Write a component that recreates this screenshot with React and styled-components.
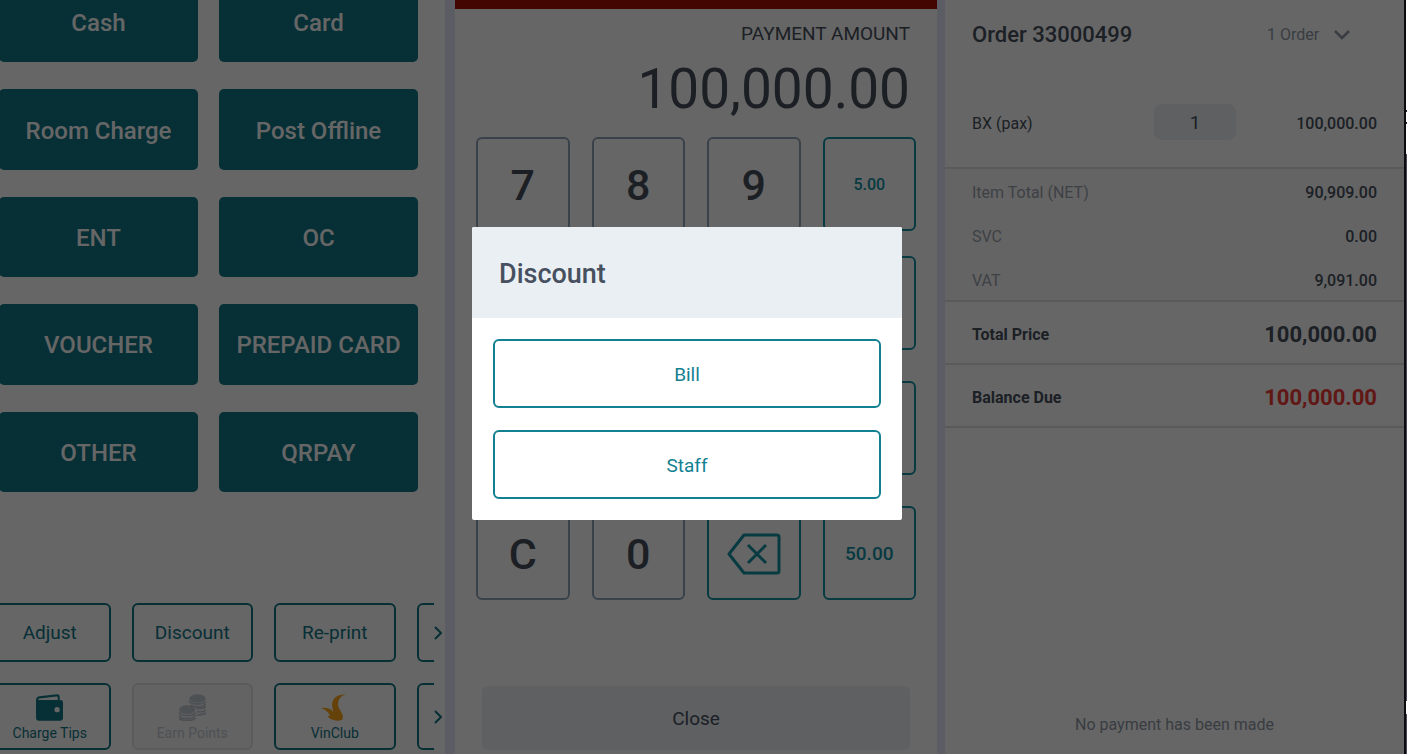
import { useState } from "react";
import styled, { createGlobalStyle, css } from "styled-components";

/**
 * POS payment screen
 * - left: payment methods + bill actions
 * - middle: amount and keypad
 * - right: order summary
 * - discount dialog sits over all three
 */

const METHODS = [
  "Cash",
  "Card",
  "Room Charge",
  "Post Offline",
  "ENT",
  "OC",
  "VOUCHER",
  "PREPAID CARD",
  "OTHER",
  "QRPAY",
];

const KEY_ROWS = [
  ["7", "8", "9", "5.00"],
  ["4", "5", "6", "10.00"],
  ["1", "2", "3", "20.00"],
  ["C", "0", "back", "50.00"],
];

const TOTALS = [
  { label: "Item Total (NET)", value: "90,909.00" },
  { label: "SVC", value: "0.00" },
  { label: "VAT", value: "9,091.00" },
];

const WalletIcon = () => (
  <svg width="27" height="27" viewBox="0 0 82 81" aria-hidden="true">
    <path
      fill="currentColor"
      fillRule="evenodd"
      d="M0 18Q0 8 10 6L64 0Q72 0 72 8V18H74Q82 18 82 26V72Q82 81 73 81H9Q0 81 0 72ZM10 13Q6 14 7 18H66V9Q66 6 62 7ZM64 39A8 8 0 1 0 64 55A8 8 0 1 0 64 39Z"
    />
  </svg>
);

const CoinsIcon = () => (
  <svg width="27" height="27" viewBox="0 0 82 81" aria-hidden="true">
    <g fill="currentColor">
      <ellipse cx="56" cy="13" rx="25" ry="13" />
      <ellipse cx="25" cy="47" rx="25" ry="13" />
    </g>
    <g fill="none" stroke="currentColor" strokeWidth="6">
      <path d="M31 20C36 33 76 33 81 20" />
      <path d="M36 33C46 41 76 42 81 29" />
      <path d="M52 43C64 44 78 42 81 38" />
      <path d="M54 53C66 54 78 52 81 47" />
      <path d="M54 63C66 63 78 61 81 56" />
      <path d="M0 55C5 68 45 68 50 55" />
      <path d="M0 64C5 77 45 77 50 64" />
      <path d="M0 72C5 82 45 82 50 72" />
    </g>
  </svg>
);

const VinIcon = () => (
  <svg width="27" height="27" viewBox="0 0 80 81" aria-hidden="true">
    <path
      fill="#f9a61a"
      d="M78 1C48 1 32 13 33 33C33 41 35 47 37 54C30 45 17 40 0 42C12 46 21 54 27 65L19 67C25 75 36 81 52 80C62 80 67 75 65 66C63 53 52 46 51 32C50 17 58 4 78 1Z"
    />
  </svg>
);

const BackspaceIcon = () => (
  <svg width="54" height="42" viewBox="0 0 54 42" aria-hidden="true">
    <g fill="none" stroke="currentColor" strokeWidth="3" strokeLinejoin="round">
      <path d="M17 2H50Q52 2 52 4V38Q52 40 50 40H17L2 21Z" />
      <path d="M21 12L39 30M39 12L21 30" />
    </g>
  </svg>
);

const ChevronRight = () => (
  <svg width="8" height="14" viewBox="0 0 8 14" aria-hidden="true">
    <path d="M1 1L7 7L1 13" fill="none" stroke="currentColor" strokeWidth="2" />
  </svg>
);

const ChevronDown = () => (
  <svg width="16" height="11" viewBox="0 0 16 11" aria-hidden="true">
    <path d="M1 1L8 8L15 1" fill="none" stroke="currentColor" strokeWidth="2.5" />
  </svg>
);

function App() {
  const [dialogOpen, setDialogOpen] = useState(true);
  const [qty, setQty] = useState("1");

  // the two middle rows are behind the dialog, no need to draw their labels
  const keyContent = (k, row) => {
    if (dialogOpen && (row === 1 || row === 2)) return null;
    return k === "back" ? <BackspaceIcon /> : k;
  };

  return (
    <Screen>
      <GlobalStyle />
      <Register>
        <MethodsPanel>
          <MethodGrid>
            {METHODS.map((name) => (
              <MethodButton key={name}>{name}</MethodButton>
            ))}
          </MethodGrid>

          <Actions>
            <ActionBar>
              <ActionClip>
                <ActionStrip>
                  <ActionButton>Adjust</ActionButton>
                  <ActionButton onClick={() => setDialogOpen(true)}>Discount</ActionButton>
                  <ActionButton>Re-print</ActionButton>
                  <ActionButton aria-label="More" />
                </ActionStrip>
              </ActionClip>
              <MoreButton aria-label="Next actions">
                <ChevronRight />
              </MoreButton>
            </ActionBar>
            <ActionBar>
              <ActionClip>
                <ActionStrip>
                  <ActionButton $small>
                    <WalletIcon />
                    Charge Tips
                  </ActionButton>
                  <ActionButton $small disabled>
                    <CoinsIcon />
                    Earn Points
                  </ActionButton>
                  <ActionButton $small>
                    <VinIcon />
                    VinClub
                  </ActionButton>
                  <ActionButton $small aria-label="More" />
                </ActionStrip>
              </ActionClip>
              <MoreButton aria-label="Next services">
                <ChevronRight />
              </MoreButton>
            </ActionBar>
          </Actions>
        </MethodsPanel>

        <PayPanel>
          <AmountBox>
            <AmountLabel>PAYMENT AMOUNT</AmountLabel>
            <Amount>100,000.00</Amount>
          </AmountBox>
          <Keypad>
            {KEY_ROWS.map((row, r) => (
              <KeyRow key={r}>
                {row.map((k, i) => (
                  <Key
                    key={k}
                    $accent={i === 3 || k === "back"}
                    $size={i < 3 ? 43 : r === 0 ? 16 : 19}
                    aria-label={k === "back" ? "Backspace" : k}
                  >
                    {keyContent(k, r)}
                  </Key>
                ))}
              </KeyRow>
            ))}
          </Keypad>
          <CloseButton>Close</CloseButton>
        </PayPanel>

        <OrderPanel>
          <OrderHead>
            <OrderTitle>Order 33000499</OrderTitle>
            <OrderPicker>
              <OrderSelect aria-label="Orders">
                <option>1 Order</option>
              </OrderSelect>
              <ChevronDown />
            </OrderPicker>
          </OrderHead>

          <ItemRow>
            <ItemName htmlFor="qty">BX (pax)</ItemName>
            <QtyInput id="qty" value={qty} onChange={(e) => setQty(e.target.value)} />
            <Price>100,000.00</Price>
          </ItemRow>

          <TotalsBox>
            {TOTALS.map((t) => (
              <TotalLine key={t.label}>
                <dt>{t.label}</dt>
                <dd>{t.value}</dd>
              </TotalLine>
            ))}
          </TotalsBox>

          <SumLine>
            <span>Total Price</span>
            <Sum>100,000.00</Sum>
          </SumLine>
          <SumLine>
            <span>Balance Due</span>
            <Sum $due>100,000.00</Sum>
          </SumLine>

          <EmptyNote>No payment has been made</EmptyNote>
        </OrderPanel>

        {dialogOpen && (
          <Overlay>
            <Dialog role="dialog" aria-modal="true" aria-labelledby="dialog-title">
              <DialogTitle id="dialog-title">Discount</DialogTitle>
              <DialogBody>
                <DialogButton onClick={() => setDialogOpen(false)}>Bill</DialogButton>
                <DialogButton onClick={() => setDialogOpen(false)}>Staff</DialogButton>
              </DialogBody>
            </Dialog>
          </Overlay>
        )}
      </Register>
      <Edge />
    </Screen>
  );
}

export default App;

const GlobalStyle = createGlobalStyle`
  * {
    box-sizing: border-box;
  }

  body {
    margin: 0;
    background: #fff;
    color: #47505e;
    font-family: Roboto, "Liberation Sans", sans-serif;
    font-size: 16px;
  }

  button, input, select {
    margin: 0;
    padding: 0;
    border: 0;
    background: none;
    color: inherit;
    font: inherit;
  }
`;

const Screen = styled.div`
  display: flex;
  height: 100vh;
  overflow: hidden;
`;

const Register = styled.div`
  position: relative;
  flex: 1;
  min-width: 0;
  display: grid;
  grid-template-columns: 445fr 10px 482fr 8px 459fr;
  grid-template-rows: 100%;
  background: #e6e6fa;
`;

const Panel = styled.section`
  display: flex;
  flex-direction: column;
  min-width: 0;
  overflow: hidden;
  background: #fff;
`;

/* ---- left ---- */

const MethodsPanel = styled(Panel)`
  grid-column: 1;
  padding-bottom: 4px;
`;

/* the list is scrolled a little, the first row is cut at the top */
const MethodGrid = styled.div`
  display: grid;
  grid-template-columns: 1fr 1fr;
  grid-auto-rows: 1fr;
  gap: 27px 21px;
  height: 510px;
  margin: -18px 27px 0 -1px;
`;

const MethodButton = styled.button`
  padding-top: 2px;
  border-radius: 5px;
  background: #117687;
  color: #fff;
  font-size: 24px;
  font-weight: 500;
`;

const Actions = styled.div`
  display: flex;
  flex-direction: column;
  gap: 21px;
  margin-top: auto;
`;

const ActionBar = styled.div`
  display: flex;
  align-items: center;
  padding-right: 3px;
`;

const ActionClip = styled.div`
  flex: 1;
  min-width: 0;
  overflow: hidden;
`;

const ActionStrip = styled.div`
  display: grid;
  grid-template-columns: repeat(4, 1fr);
  gap: 21px;
  width: 549px;
  margin-left: -11px;
`;

const ActionButton = styled.button`
  display: flex;
  flex-direction: column;
  align-items: center;
  justify-content: center;
  gap: 4px;
  height: ${({ $small }) => ($small ? 67 : 59)}px;
  padding-top: 1px;
  border: 2px solid #117687;
  border-radius: 6px;
  color: #117687;
  font-size: ${({ $small }) => ($small ? 14 : 19)}px;
  line-height: ${({ $small }) => ($small ? 16 : 24)}px;

  &:disabled {
    border-color: #dfe3e7;
    background: #f8f8f8;
    color: #c3cad2;
  }
`;

const MoreButton = styled.button`
  display: flex;
  color: #117687;
`;

/* ---- middle ---- */

const PayPanel = styled(Panel)`
  grid-column: 3;
  border-top: 9px solid #a80f00;
  padding: 0 21px 4px;
`;

const AmountBox = styled.div`
  padding: 12px 6px 0;
  text-align: right;
`;

const AmountLabel = styled.div`
  font-size: 19px;
  line-height: 26px;
`;

const Amount = styled.div`
  font-size: 55px;
  line-height: 66px;
  padding: 9px 0 15px;
`;

const Keypad = styled.div`
  display: flex;
  flex-direction: column;
  gap: 31px;
`;

const KeyRow = styled.div`
  display: grid;
  grid-template-columns: repeat(4, 1fr);
  gap: 22px;

  &:first-child {
    margin-bottom: -6px;
  }
`;

const Key = styled.button`
  display: flex;
  align-items: center;
  justify-content: center;
  height: 94px;
  padding-top: 1px;
  border: 2px solid #90a4b8;
  border-radius: 6px;
  font-size: ${({ $size }) => $size}px;
  font-weight: 500;

  ${({ $accent }) =>
    $accent &&
    css`
      border-color: #1392a3;
      color: #1392a3;
    `}
`;

const CloseButton = styled.button`
  height: 64px;
  margin: auto 6px 0;
  border-radius: 6px;
  background: #eaeff4;
  font-size: 19px;
`;

/* ---- right ---- */

const OrderPanel = styled(Panel)`
  grid-column: 5;
  line-height: 20px;
`;

const OrderHead = styled.header`
  display: flex;
  align-items: center;
  justify-content: space-between;
  padding: 21px 54px 19px 27px;
`;

const OrderTitle = styled.h1`
  margin: 0;
  font-size: 22px;
  font-weight: 500;
  line-height: 28px;
`;

const OrderPicker = styled.div`
  display: flex;
  align-items: center;
  gap: 14px;
  color: #8f99a6;
`;

const OrderSelect = styled.select`
  appearance: none;
`;

const ItemRow = styled.div`
  display: grid;
  grid-template-columns: 182px 82px 1fr;
  align-items: center;
  padding: 36px 27px 27px;
  border-bottom: 2px solid #e2e2e2;
`;

const ItemName = styled.label`
  padding-top: 3px;
`;

const QtyInput = styled.input`
  width: 100%;
  height: 36px;
  border-radius: 8px;
  background: #eaeff4;
  font-size: 19px;
  text-align: center;
`;

const Price = styled.span`
  padding-top: 3px;
  font-weight: 500;
  text-align: right;
`;

const TotalsBox = styled.dl`
  display: flex;
  flex-direction: column;
  gap: 24px;
  margin: 0;
  padding: 14px 27px 9px;
  border-bottom: 2px solid #e2e2e2;
  background: #fafafa;
`;

const TotalLine = styled.div`
  display: flex;
  justify-content: space-between;

  dt {
    color: #9aa3ae;
  }

  dd {
    margin: 0;
    font-weight: 500;
  }
`;

const SumLine = styled.div`
  display: flex;
  align-items: center;
  justify-content: space-between;
  height: 63px;
  padding: 4px 27px 0;
  border-bottom: 2px solid #e2e2e2;
  font-weight: 700;
`;

const Sum = styled.span`
  font-size: 22px;
  color: ${({ $due }) => ($due ? "#f03a36" : "inherit")};
`;

const EmptyNote = styled.p`
  margin: auto 0 19px;
  color: #8f99a6;
  text-align: center;
`;

/* ---- dialog ---- */

const Overlay = styled.div`
  position: absolute;
  inset: 0;
  display: flex;
  align-items: center;
  justify-content: center;
  padding: 0 30px 7px 0;
  background: rgba(0, 0, 0, 0.6);
`;

const Dialog = styled.div`
  width: 430px;
  border-radius: 2px;
  overflow: hidden;
  background: #fff;
`;

const DialogTitle = styled.h2`
  margin: 0;
  padding: 32px 27px 29px;
  background: #eaeff4;
  font-size: 27px;
  font-weight: 500;
  line-height: 30px;
`;

const DialogBody = styled.div`
  display: flex;
  flex-direction: column;
  gap: 22px;
  padding: 21px;
`;

const DialogButton = styled.button`
  height: 69px;
  padding-top: 2px;
  border: 2px solid #128091;
  border-radius: 6px;
  color: #128091;
  font-size: 19px;
`;

/* thin border and a sliver of the window behind it */
const Edge = styled.div`
  width: 3px;
  border-left: 2px solid #0b0b10;
  background: linear-gradient(
    #fff 110px,
    #22222c 110px 112px,
    #fff 112px 122px,
    #22222c 122px 124px,
    #fff 124px 154px,
    #4a4a5c 154px 701px,
    #fff 701px 714px,
    #4a4a5c 714px
  );
`;
